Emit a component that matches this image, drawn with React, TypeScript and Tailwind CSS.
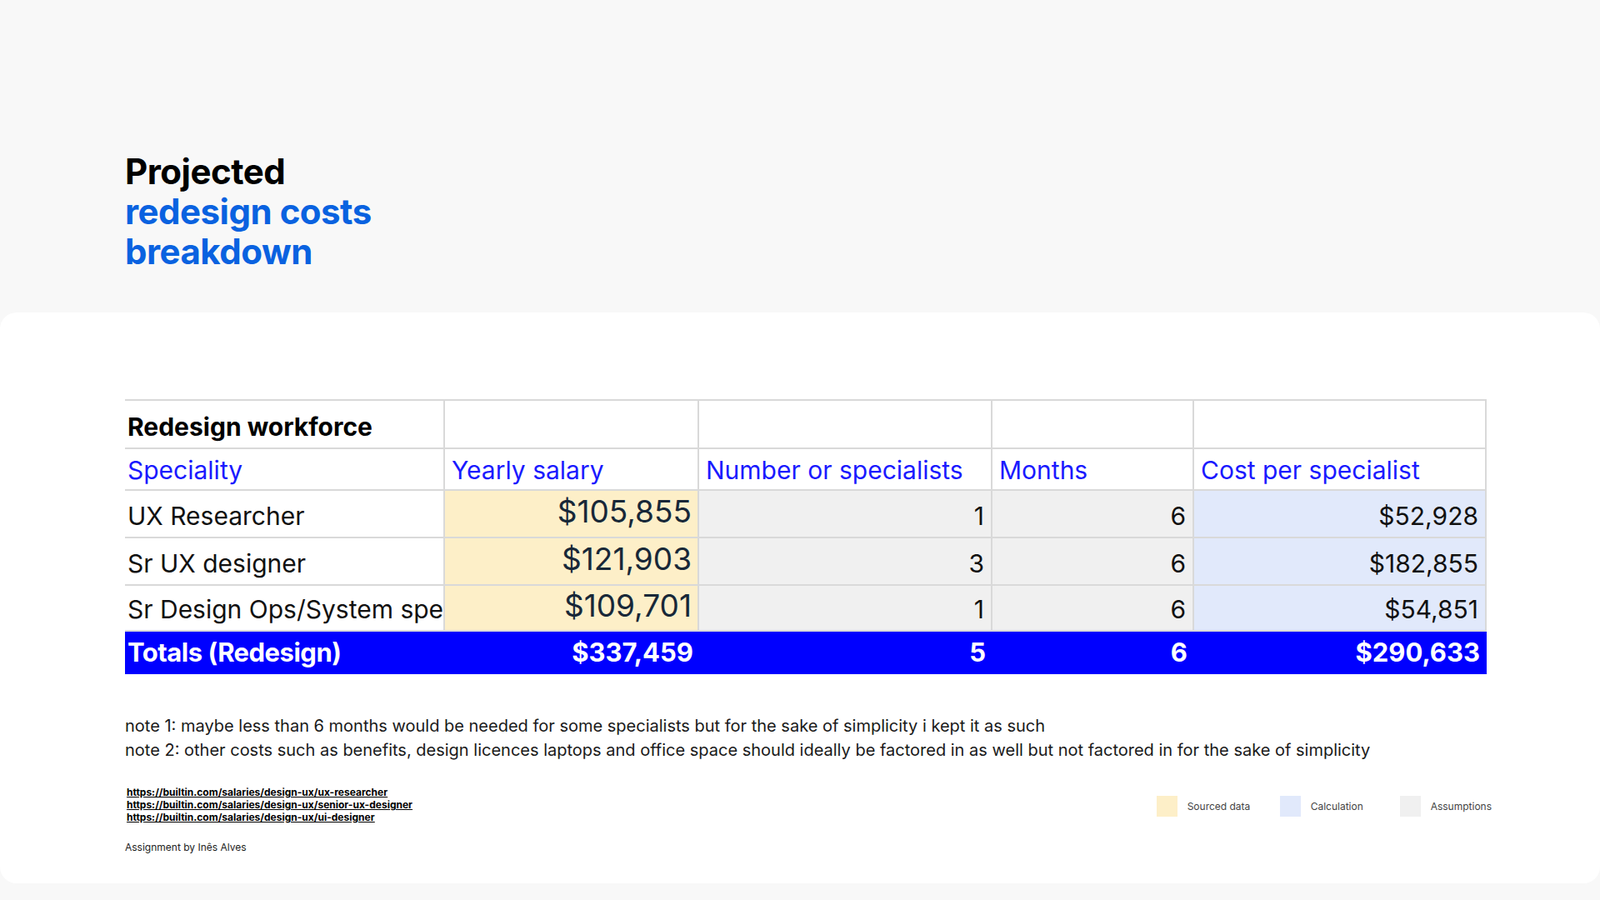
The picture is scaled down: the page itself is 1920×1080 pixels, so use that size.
import React from "react";

const rows = [
  { name: "UX Researcher", salary: "$105,855", count: "1", months: "6", cost: "$52,928", h: "h-[57px]" },
  { name: "Sr UX designer", salary: "$121,903", count: "3", months: "6", cost: "$182,855", h: "h-[57px]" },
  { name: "Sr Design Ops/System specialist", salary: "$109,701", count: "1", months: "6", cost: "$54,851", h: "h-[55px]" },
];

const cols = "grid grid-cols-[384px_305px_352px_242px_351px]";
const cell = "border-r-2 border-[#d9d9d9] overflow-hidden whitespace-nowrap";

export default function App() {
  return (
    <div className="w-[1920px] h-[1080px] bg-[#f8f8f8] flex flex-col font-[family-name:Inter,sans-serif]">
      <div className="h-[375px] pl-[150px] pt-[182px]">
        <h1 className="text-[42px] leading-[48px] font-bold tracking-[-0.5px]">
          <span className="text-black">Projected</span>
          <br />
          <span className="text-[#0a62e0]">redesign costs</span>
          <br />
          <span className="text-[#0a62e0]">breakdown</span>
        </h1>
      </div>
      <div className="bg-white rounded-[20px] h-[685px] pl-[150px] pt-[104px] flex flex-col">
        <div className="w-[1634px] font-[family-name:'Liberation_Sans',Arial,sans-serif] border-t-2 border-[#d9d9d9]">
          <div className={`${cols} h-[58px] border-b-2 border-[#d9d9d9]`}>
            <div className={`${cell} flex items-end pb-[2px] pl-[3px] text-[30px] font-bold text-black`}>Redesign workforce</div>
            <div className={cell} />
            <div className={cell} />
            <div className={cell} />
            <div className={cell} />
          </div>
          <div className={`${cols} h-[50px] border-b-2 border-[#d9d9d9] text-[30px] text-[#1a1aff]`}>
            <div className={`${cell} flex items-end pl-[3px]`}>Speciality</div>
            <div className={`${cell} flex items-end pl-[8px]`}>Yearly salary</div>
            <div className={`${cell} flex items-end pl-[8px]`}>Number or specialists</div>
            <div className={`${cell} flex items-end pl-[8px]`}>Months</div>
            <div className={`${cell} flex items-end pl-[8px]`}>Cost per specialist</div>
          </div>
          {rows.map((r) => (
            <div key={r.name} className={`${cols} ${r.h} border-b-2 border-[#d9d9d9] text-[30px] text-[#111]`}>
              <div className={`${cell} flex items-end pb-[2px] pl-[3px]`}>{r.name}</div>
              <div className={`${cell} bg-[#fdefc8] flex items-center justify-end pb-[6px] pr-[7px] text-[37px] text-[#182838]`}>{r.salary}</div>
              <div className={`${cell} bg-[#f0f0f0] flex items-end justify-end pb-[2px] pr-[8px]`}>{r.count}</div>
              <div className={`${cell} bg-[#f0f0f0] flex items-end justify-end pb-[2px] pr-[8px]`}>{r.months}</div>
              <div className={`${cell} bg-[#e1e9fb] flex items-end justify-end pb-[2px] pr-[8px]`}>{r.cost}</div>
            </div>
          ))}
          <div className={`${cols} h-[51px] bg-[#0000ff] text-white text-[31px] font-bold`}>
            <div className="flex items-center pl-[3px] tracking-[-0.5px]">Totals (Redesign)</div>
            <div className="flex items-center justify-end pr-[7px]">$337,459</div>
            <div className="flex items-center justify-end pr-[8px]">5</div>
            <div className="flex items-center justify-end pr-[8px]">6</div>
            <div className="flex items-center justify-end pr-[8px]">$290,633</div>
          </div>
        </div>
        <div className="mt-[48px] text-[20px] leading-[29px] text-[#1a1a1a]">
          <p>note 1: maybe less than 6 months would be needed for some specialists but for the sake of simplicity i kept it as such</p>
          <p>note 2: other costs such as benefits, design licences laptops and office space should ideally be factored in as well but not factored in for the sake of simplicity</p>
        </div>
        <div className="mt-[28px] flex items-start w-[1640px] justify-between">
          <div className="pl-[2px] flex flex-col text-[12px] leading-[15px] font-bold underline font-[family-name:'Liberation_Sans',Arial,sans-serif] text-black">
            <a>https://builtin.com/salaries/design-ux/ux-researcher</a>
            <a>https://builtin.com/salaries/design-ux/senior-ux-designer</a>
            <a>https://builtin.com/salaries/design-ux/ui-designer</a>
          </div>
          <div className="flex items-center mt-[12px] text-[12px] text-[#444]">
            <span className="w-[25px] h-[25px] bg-[#fdefc8]" />
            <span className="ml-[12px] w-[111px]">Sourced data</span>
            <span className="w-[25px] h-[25px] bg-[#e1e9fb]" />
            <span className="ml-[12px] w-[107px]">Calculation</span>
            <span className="w-[25px] h-[25px] bg-[#f0f0f0]" />
            <span className="ml-[12px]">Assumptions</span>
          </div>
        </div>
        <div className="mt-[20px] text-[12px] text-[#222]">Assignment by Inês Alves</div>
      </div>
    </div>
  );
}
